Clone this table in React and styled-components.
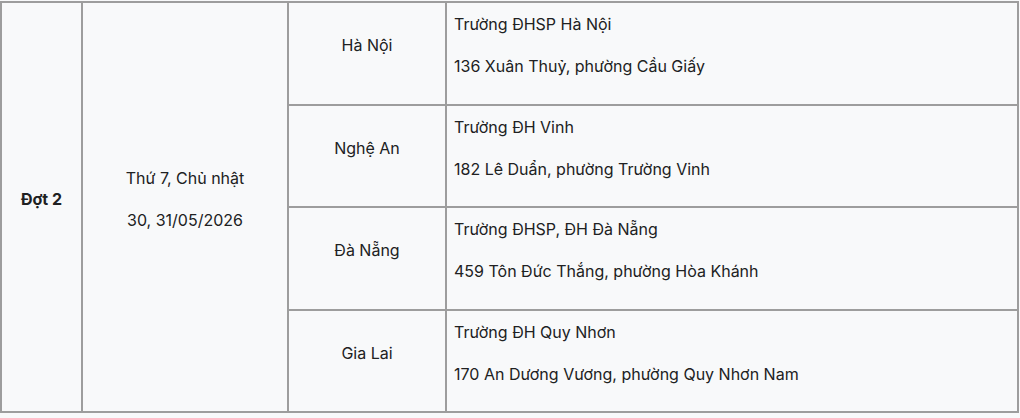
import React from "react";
import styled, { createGlobalStyle } from "styled-components";

const GlobalStyle = createGlobalStyle`
  body {
    margin: 0;
    background: #f8f9fa;
    font-family: Inter, "Noto Sans", "Liberation Sans", sans-serif;
    color: #202122;
  }
`;

const rows = [
  { city: "Hà Nội", school: "Trường ĐHSP Hà Nội", address: "136 Xuân Thuỷ, phường Cầu Giấy" },
  { city: "Nghệ An", school: "Trường ĐH Vinh", address: "182 Lê Duẩn, phường Trường Vinh" },
  { city: "Đà Nẵng", school: "Trường ĐHSP, ĐH Đà Nẵng", address: "459 Tôn Đức Thắng, phường Hòa Khánh" },
  { city: "Gia Lai", school: "Trường ĐH Quy Nhơn", address: "170 An Dương Vương, phường Quy Nhơn Nam" },
];

const App = () => {
  return (
    <Page>
      <GlobalStyle />
      <Table>
        <colgroup>
          <col style={{ width: 81 }} />
          <col style={{ width: 206 }} />
          <col style={{ width: 158 }} />
          <col />
        </colgroup>
        <tbody>
          {rows.map((r, i) => (
            <tr key={r.city}>
              {i === 0 && (
                <>
                  <Cell rowSpan={4} center>
                    <Para><b>Đợt 2</b></Para>
                  </Cell>
                  <Cell rowSpan={4} center>
                    <Para>Thứ 7, Chủ nhật</Para>
                    <Para>30, 31/05/2026</Para>
                  </Cell>
                </>
              )}
              <Cell center>
                <Para>{r.city}</Para>
              </Cell>
              <Cell>
                <Para>{r.school}</Para>
                <Para>{r.address}</Para>
              </Cell>
            </tr>
          ))}
        </tbody>
      </Table>
    </Page>
  );
};

const Page = styled.div`
  padding-top: 1px;
  width: 1019px;
`;

const Table = styled.table`
  width: 100%;
  border-collapse: collapse;
  table-layout: fixed;
  background: #f8f9fa;
`;

const Cell = styled.td`
  border: 2px solid #9d9d9d;
  padding: 8px 7px 8.5px;
  height: 84px;
  vertical-align: middle;
  text-align: ${(p) => (p.center ? "center" : "left")};
  font-size: 16px;
`;

const Para = styled.p`
  margin: 0 0 16px;
  line-height: 26px;
`;

export default App;
